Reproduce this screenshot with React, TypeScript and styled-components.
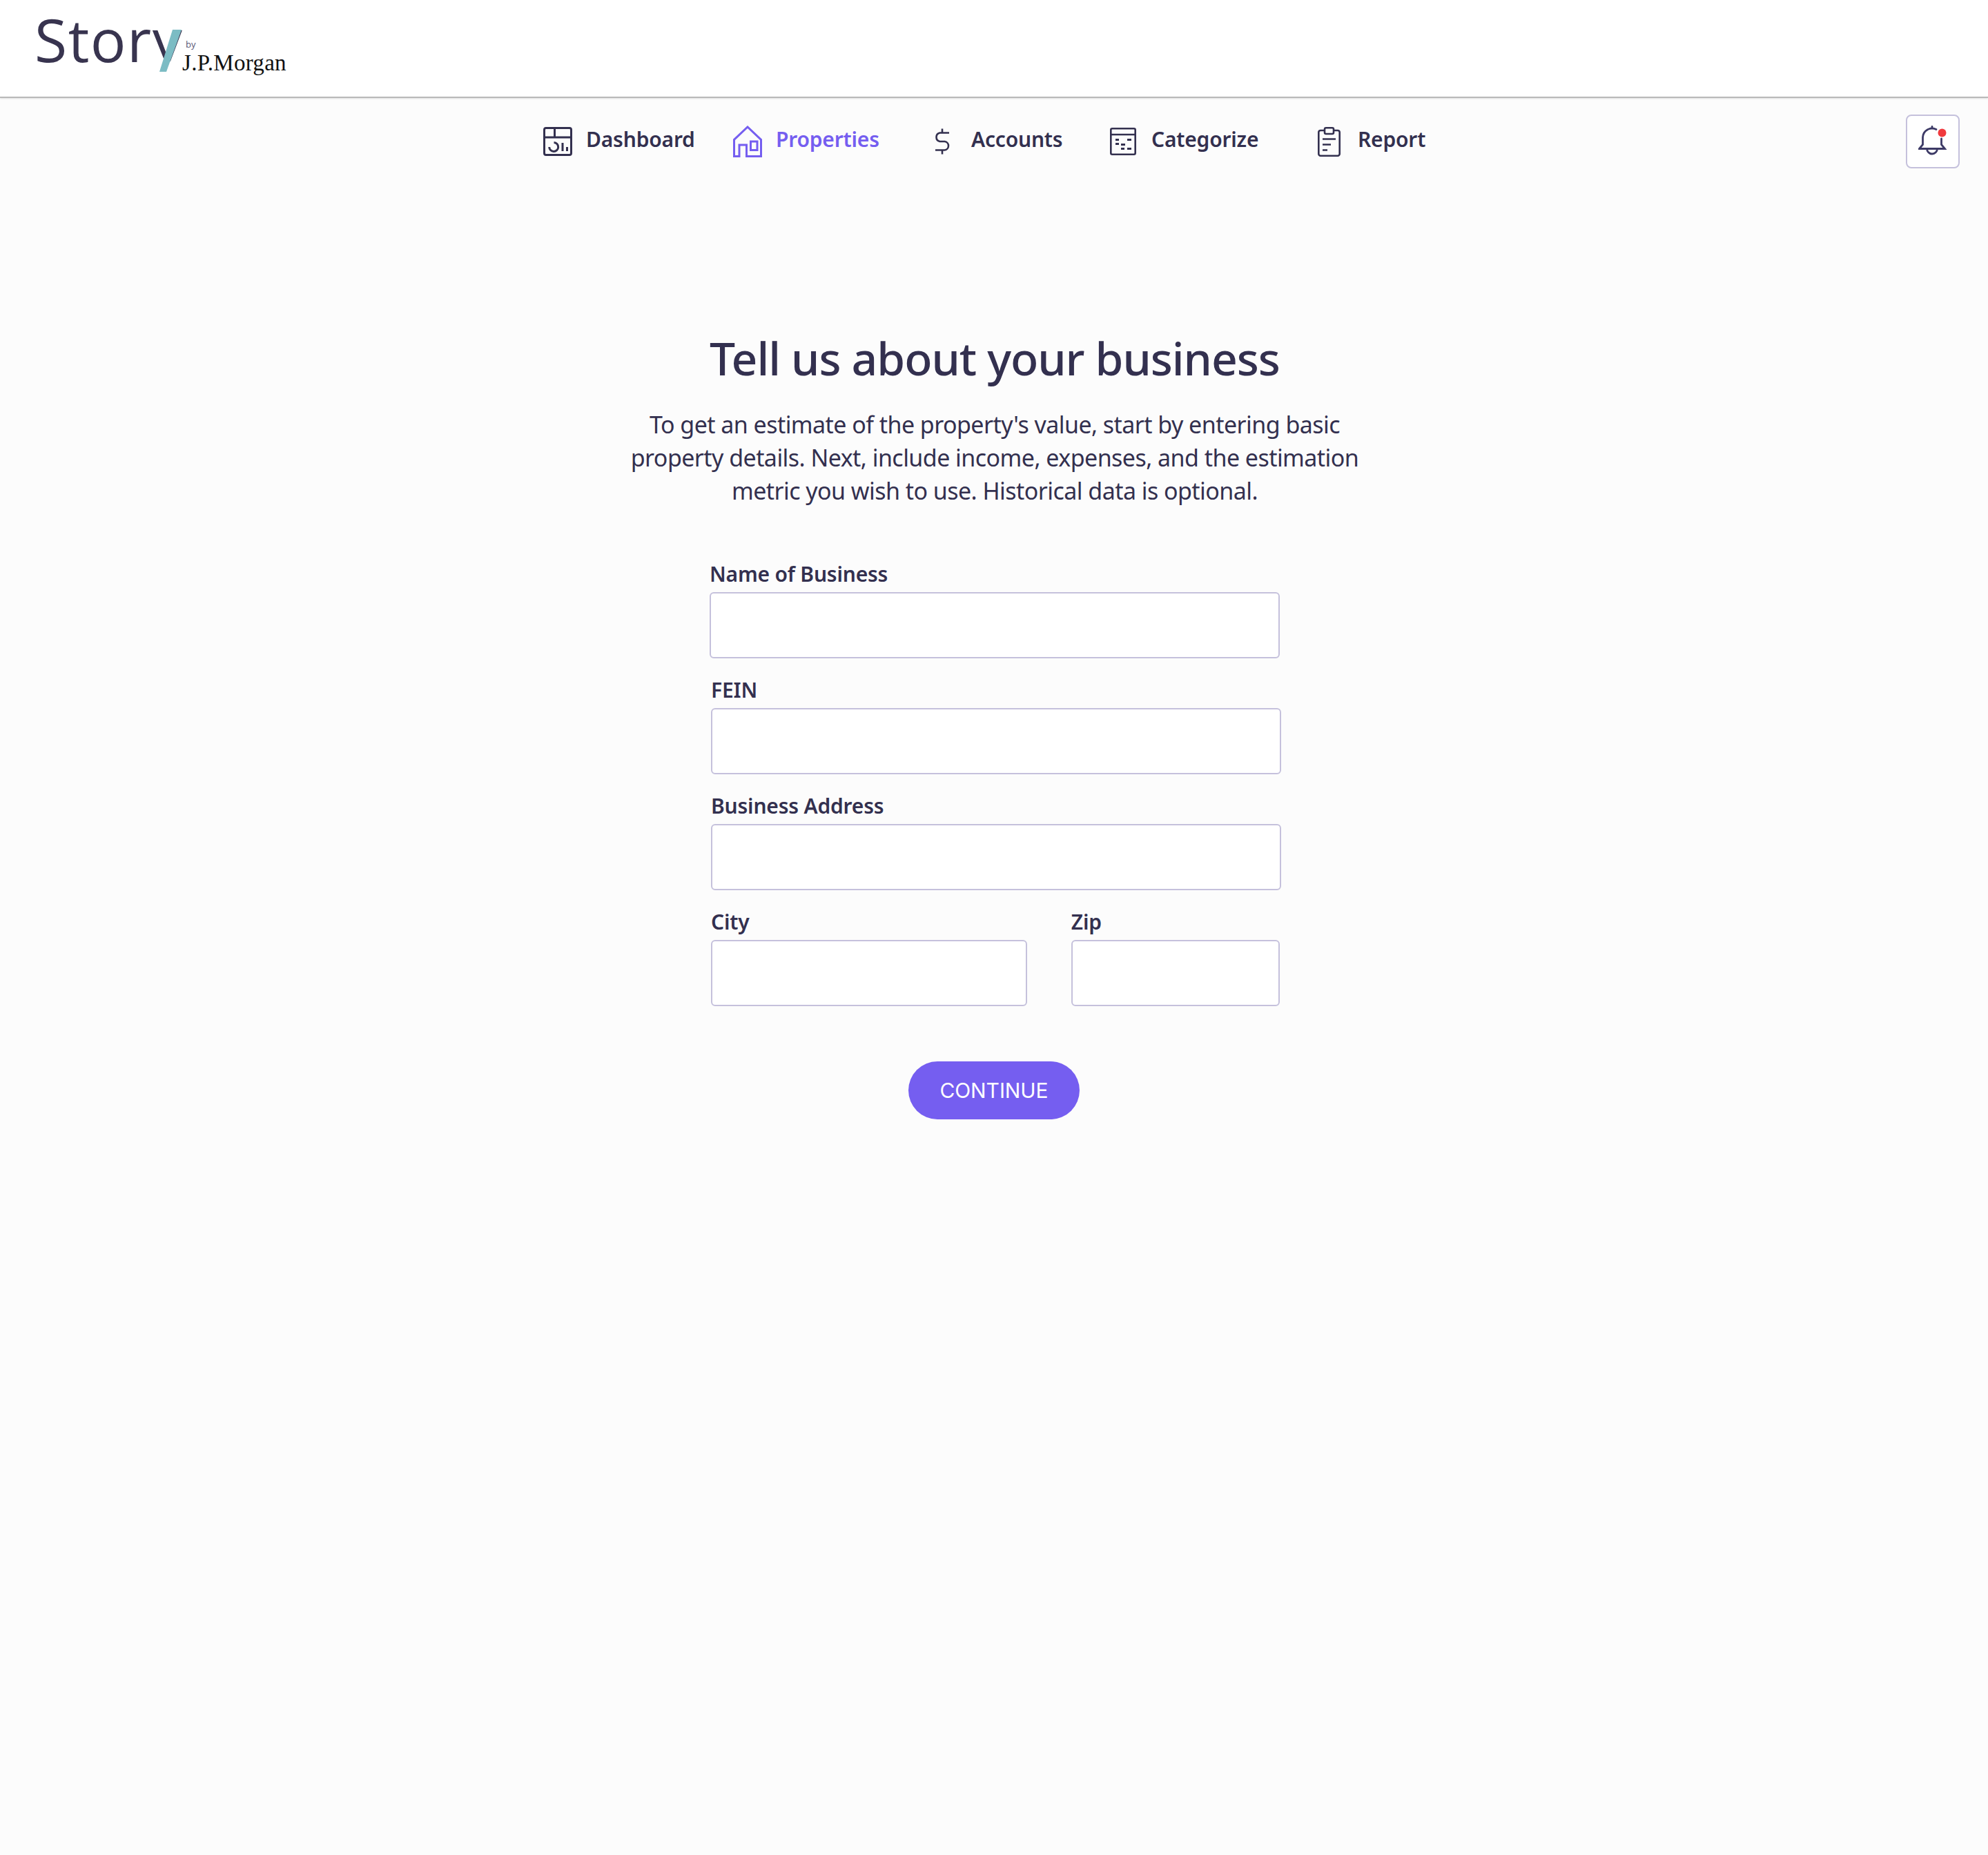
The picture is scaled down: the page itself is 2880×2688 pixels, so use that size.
import React from 'react';
import styled, { createGlobalStyle } from 'styled-components';

const INK = '#33304f';
const PURPLE = '#755ef0';
const EDGE = '#c5c1dc';

const GlobalStyle = createGlobalStyle`
  html, body {
    margin: 0;
    padding: 0;
    background: #fcfcfc;
  }
  body {
    font-family: "Noto Sans", "Open Sans", sans-serif;
    color: ${INK};
  }
`;

const Page = styled.div`
  width: 2880px;
  min-height: 2688px;
  background: #fcfcfc;
`;

const Header = styled.header`
  height: 140px;
  box-sizing: content-box;
  background: #fff;
  border-bottom: 2px solid #b9b9b9;
  box-shadow: 0 1px 2px rgba(0, 0, 0, 0.12);
  padding-left: 50px;
  display: flex;
  align-items: flex-start;
`;

const Logo = styled.div`
  position: relative;
  width: 370px;
  height: 120px;
`;

const LogoWord = styled.span`
  position: absolute;
  left: 0;
  top: -2px;
  font-family: "Open Sans", sans-serif;
  font-size: 86px;
  font-weight: 500;
  line-height: 117px;
  letter-spacing: 1.5px;
  color: #38344f;
`;

/* the y loses its tail, the teal slash stands in for it */
const LogoTail = styled.span`
  display: inline-block;
  clip-path: inset(0 0 26px 0);
`;

const LogoSlash = styled.svg`
  position: absolute;
  left: 170px;
  top: 40px;
`;

const LogoBy = styled.span`
  position: absolute;
  left: 219px;
  top: 56px;
  font-family: "Open Sans", sans-serif;
  font-size: 13px;
  line-height: 16px;
  color: #5b5876;
`;

const LogoBank = styled.span`
  position: absolute;
  left: 214px;
  top: 72px;
  font-family: "Liberation Serif", serif;
  font-size: 33px;
  line-height: 38px;
  letter-spacing: 0.3px;
  color: #111;
`;

const NavBar = styled.nav`
  display: flex;
  align-items: center;
  height: 126px;
  padding: 0 41px 0 787px;
`;

const NavItem = styled.a<{ $width: number; $gap: number; $active?: boolean }>`
  display: flex;
  align-items: center;
  width: ${({ $width }) => $width}px;
  gap: ${({ $gap }) => $gap}px;
  font-size: 30px;
  font-weight: 600;
  line-height: 44px;
  letter-spacing: -0.2px;
  color: ${({ $active }) => ($active ? PURPLE : INK)};
  svg {
    flex: none;
  }
`;

const NavLabel = styled.span`
  margin-bottom: 6px;
`;

const BellButton = styled.button`
  margin-left: auto;
  width: 78px;
  height: 78px;
  padding: 0;
  display: flex;
  align-items: center;
  justify-content: center;
  background: #fff;
  border: 2px solid ${EDGE};
  border-radius: 8px;
`;

const Main = styled.main`
  display: flex;
  flex-direction: column;
  align-items: center;
  padding-top: 205px;
`;

const Title = styled.h1`
  margin: 0 0 28px 2px;
  font-size: 66px;
  font-weight: 500;
  line-height: 90px;
  letter-spacing: -1.04px;
  color: ${INK};
`;

const Intro = styled.p`
  margin: 0 0 79px 2px;
  width: 1200px;
  font-size: 34px;
  line-height: 48px;
  letter-spacing: -0.55px;
  text-align: center;
  color: ${INK};
`;

const Form = styled.form`
  width: 826px;
  margin-left: 2px;
  display: flex;
  flex-direction: column;
  gap: 28px;
`;

const Row = styled.div`
  display: flex;
  gap: 64px;
  margin-left: 2px;
`;

const Field = styled.label<{ $width?: number; $indent?: number }>`
  display: flex;
  flex-direction: column;
  gap: 8px;
  width: ${({ $width }) => ($width ? `${$width}px` : '100%')};
  margin-left: ${({ $indent }) => $indent ?? 0}px;
  font-size: 30px;
  font-weight: 600;
  line-height: 36px;
  letter-spacing: -0.2px;
  color: ${INK};
`;

const Input = styled.input`
  box-sizing: border-box;
  width: 100%;
  height: 96px;
  background: #fff;
  border: 2px solid ${EDGE};
  border-radius: 6px;
  outline: none;
`;

const ContinueButton = styled.button`
  margin: 80px 0 0;
  width: 248px;
  height: 84px;
  border: 0;
  border-radius: 42px;
  background: ${PURPLE};
  color: #fff;
  font-family: "Inter", sans-serif;
  font-size: 30px;
  letter-spacing: -0.1px;
`;

const DashboardIcon = () => (
  <svg width="42" height="42" viewBox="0 0 42 42" fill="none" stroke="currentColor" strokeWidth="3">
    <rect x="1.5" y="1.5" width="39" height="39" rx="2.5" />
    <path d="M1.5 15h39M16.5 1.5V15" />
    <path d="M15.5 22.5a6.5 6.5 0 1 1-6.8 6.5" />
    <path d="M28 23v12M34.5 29v6" />
  </svg>
);

const HomeIcon = () => (
  <svg width="42" height="46" viewBox="0 0 42 46" fill="none" stroke="currentColor" strokeWidth="3">
    <path d="M1.5 44.5V20.5L21 2l19.5 18.5V44.5H19.5V28H9V44.5Z" />
    <rect x="25.5" y="23" width="9.5" height="12.5" />
  </svg>
);

const DollarIcon = () => (
  <svg width="24" height="38" viewBox="0 0 24 38" fill="none" stroke="currentColor" strokeWidth="2.6">
    <path d="M12 0.5V6.5M12 31.5V37.5" />
    <path d="M22 6.5H8.5a6.4 6.4 0 0 0 0 12.5h7a6.3 6.3 0 0 1 0 12.5H2" />
  </svg>
);

const CategorizeIcon = () => (
  <svg width="38" height="40" viewBox="0 0 38 40" fill="none" stroke="currentColor" strokeWidth="2.6">
    <rect x="1.3" y="1.3" width="35.4" height="37.4" rx="2" />
    <path d="M1.3 10h35.4" />
    <path
      fill="currentColor"
      stroke="none"
      d="M8 16h5v3H8zM25 16h6v3h-6zM8 22h5v3H8zM16 23h6v3h-6zM16 29h5v3h-5zM25 29h6v3h-6z"
    />
  </svg>
);

const ReportIcon = () => (
  <svg width="33" height="43" viewBox="0 0 33 43" fill="none" stroke="currentColor" strokeWidth="2.6">
    <path d="M10 5H4a2.7 2.7 0 0 0-2.7 2.7V39a2.7 2.7 0 0 0 2.7 2.7h25a2.7 2.7 0 0 0 2.7-2.7V7.7A2.7 2.7 0 0 0 29 5h-6" />
    <rect x="10" y="1.3" width="13" height="8.7" rx="2" />
    <path d="M7 17.5h19M7 25.5h12M7 33.5h7" />
  </svg>
);

const BellIcon = () => (
  <svg width="42" height="46" viewBox="0 0 42 46" fill="none">
    <path
      stroke="#3d3a66"
      strokeWidth="2.8"
      strokeLinecap="round"
      d="M20 1.5V4M26 5.5A13.5 13.5 0 0 0 6.5 17v10.5L1.5 33.5h37L33.5 27.5V19M12.5 33.5a7.5 7.5 0 1 0 15 0"
    />
    <circle cx="34.5" cy="10.5" r="6" fill="#f03a3e" />
  </svg>
);

const links = [
  { label: 'Dashboard', width: 275, gap: 20, icon: <DashboardIcon /> },
  { label: 'Properties', width: 291, gap: 20, icon: <HomeIcon />, active: true },
  { label: 'Accounts', width: 255, gap: 30, icon: <DollarIcon /> },
  { label: 'Categorize', width: 301, gap: 22, icon: <CategorizeIcon /> },
  { label: 'Report', width: 170, gap: 25, icon: <ReportIcon /> },
];

export default function App() {
  return (
    <Page>
      <GlobalStyle />
      <Header>
        <Logo>
          <LogoWord>
            Stor<LogoTail>y</LogoTail>
          </LogoWord>
          <LogoSlash width="44" height="66" viewBox="0 0 44 66">
            <polygon points="30,3 43,3 21,64 11,64" fill="#7cbcc4" />
          </LogoSlash>
          <LogoBy>by</LogoBy>
          <LogoBank>J.P.Morgan</LogoBank>
        </Logo>
      </Header>
      <NavBar>
        {links.map((link) => (
          <NavItem key={link.label} $width={link.width} $gap={link.gap} $active={link.active}>
            {link.icon}
            <NavLabel>{link.label}</NavLabel>
          </NavItem>
        ))}
        <BellButton aria-label="Notifications">
          <BellIcon />
        </BellButton>
      </NavBar>
      <Main>
        <Title>Tell us about your business</Title>
        <Intro>
          To get an estimate of the property's value, start by entering basic
          <br />
          property details. Next, include income, expenses, and the estimation
          <br />
          metric you wish to use. Historical data is optional.
        </Intro>
        <Form>
          <Field>
            Name of Business
            <Input />
          </Field>
          <Field $indent={2}>
            FEIN
            <Input />
          </Field>
          <Field $indent={2}>
            Business Address
            <Input />
          </Field>
          <Row>
            <Field $width={459}>
              City
              <Input />
            </Field>
            <Field $width={303}>
              Zip
              <Input />
            </Field>
          </Row>
        </Form>
        <ContinueButton>CONTINUE</ContinueButton>
      </Main>
    </Page>
  );
}
